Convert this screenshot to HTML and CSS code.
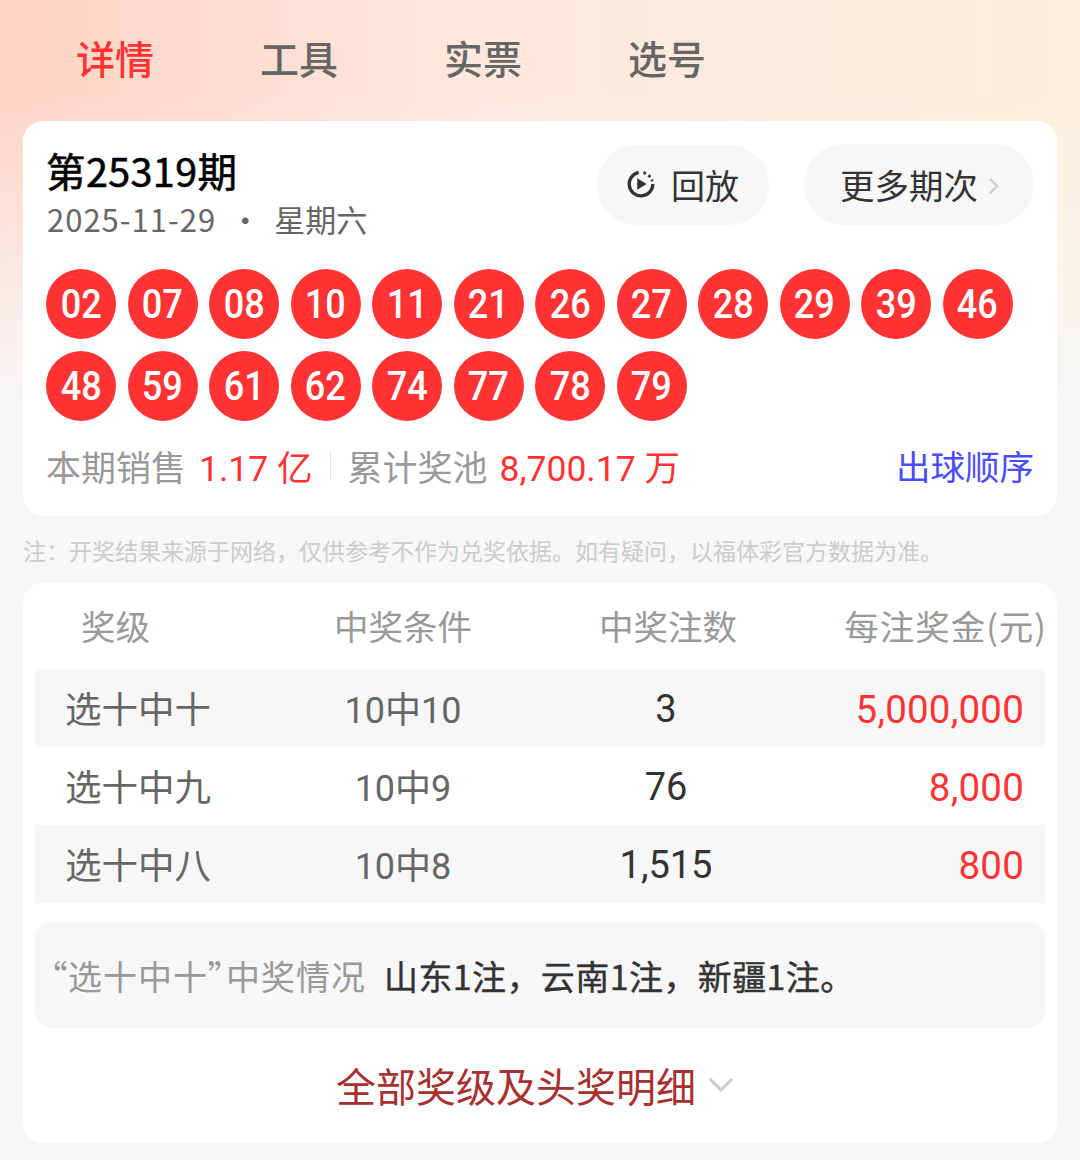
FILE: index.html
```html
<!DOCTYPE html>
<html lang="zh-CN">
<head>
    <meta charset="UTF-8">
    <meta name="viewport" content="width=device-width, initial-scale=1.0">
    <title>开奖详情</title>
    <link rel="stylesheet" href="styles.css">
</head>
<body>
    <nav class="tabs">
        <a class="tab active">详情</a>
        <a class="tab">工具</a>
        <a class="tab">实票</a>
        <a class="tab">选号</a>
    </nav>

    <section class="card draw">
        <div class="draw-head">
            <div class="draw-info">
                <h1>第25319期</h1>
                <p class="draw-date"><span class="date-num">2025-11-29</span><i>·</i><span>星期六</span></p>
            </div>
            <a class="pill replay">
                <svg class="replay-icon" viewBox="0 0 32 32" width="30" height="30">
                    <path d="M13.5 3.7A12.6 12.6 0 1 0 28.6 16" fill="none" stroke="#333" stroke-width="3.6"/>
                    <path d="M18.6 3.8l2.8.9M24 6.6l2 1.9M27.4 11.4l.7 1.6" fill="none" stroke="#333" stroke-width="3"/>
                    <path d="M12 9.8L22 16l-10 6.2z" fill="#333"/>
                </svg>
                回放
            </a>
            <a class="pill more">
                更多期次
                <svg class="more-arrow" viewBox="0 0 12 20" width="11" height="18">
                    <path d="M2 2l8 8-8 8" fill="none" stroke="#ccc" stroke-width="2.4"/>
                </svg>
            </a>
        </div>

        <div class="balls">
            <span class="ball"><span>02</span></span><span class="ball"><span>07</span></span><span class="ball"><span>08</span></span><span class="ball"><span>10</span></span>
            <span class="ball"><span>11</span></span><span class="ball"><span>21</span></span><span class="ball"><span>26</span></span><span class="ball"><span>27</span></span>
            <span class="ball"><span>28</span></span><span class="ball"><span>29</span></span><span class="ball"><span>39</span></span><span class="ball"><span>46</span></span>
            <span class="ball"><span>48</span></span><span class="ball"><span>59</span></span><span class="ball"><span>61</span></span><span class="ball"><span>62</span></span>
            <span class="ball"><span>74</span></span><span class="ball"><span>77</span></span><span class="ball"><span>78</span></span><span class="ball"><span>79</span></span>
        </div>

        <div class="stats">
            <span class="stat-label">本期销售</span>
            <span class="stat-value">1.17 亿</span>
            <span class="stat-sep"></span>
            <span class="stat-label">累计奖池</span>
            <span class="stat-value">8,700.17 万</span>
            <a class="order-link">出球顺序</a>
        </div>
    </section>

    <p class="notice">注：开奖结果来源于网络，仅供参考不作为兑奖依据。如有疑问，以福体彩官方数据为准。</p>

    <section class="card prizes">
        <div class="prize-head">
            <span>奖级</span>
            <span>中奖条件</span>
            <span>中奖注数</span>
            <span>每注奖金(元)</span>
        </div>
        <div class="prize-row">
            <span>选十中十</span>
            <span class="num">10中10</span>
            <span class="num count">3</span>
            <span class="num money">5,000,000</span>
        </div>
        <div class="prize-row">
            <span>选十中九</span>
            <span class="num">10中9</span>
            <span class="num count">76</span>
            <span class="num money">8,000</span>
        </div>
        <div class="prize-row">
            <span>选十中八</span>
            <span class="num">10中8</span>
            <span class="num count">1,515</span>
            <span class="num money">800</span>
        </div>

        <div class="winners">
            <span class="winners-label">“选十中十”中奖情况</span>
            <span class="winners-text">山东1注，云南1注，新疆1注。</span>
        </div>

        <a class="all-prizes">
            全部奖级及头奖明细
            <svg viewBox="0 0 26 16" width="26" height="16">
                <path d="M2 2l11 11L24 2" fill="none" stroke="#ccc" stroke-width="3"/>
            </svg>
        </a>
    </section>
</body>
</html>
```

FILE: styles.css
```css
/* Page */
body {
    margin: 0;
    height: 1160px;
    overflow: hidden;
    background-color: #f7f7f7;
    background-image:
        linear-gradient(180deg, rgba(247, 247, 247, 0) 0, rgba(247, 247, 247, 0) 90px, #f7f7f7 400px),
        linear-gradient(90deg, #ffd3c4 0, #ffe8de 45%, #fbf0da 100%);
    background-repeat: no-repeat;
    font-family: "Noto Sans CJK SC", "Roboto", sans-serif;
    color: #333;
}

p, h1 {
    margin: 0;
}

/* Tabs */
.tabs {
    display: flex;
    gap: 106px;
    height: 121px;
    padding: 0 0 8px 76px;
    box-sizing: border-box;
    align-items: center;
}

.tab {
    font-size: 39px;
    font-weight: 500;
    color: #666;
}

.tab.active {
    color: #ff3333;
}

/* Cards */
.card {
    margin: 0 23px;
    background: #fff;
    border-radius: 20px;
}

.draw {
    height: 395px;
    box-sizing: border-box;
    padding: 23px 23px 0;
}

.draw-head {
    display: flex;
    align-items: flex-start;
    height: 125px;
}

.draw-info {
    flex: 1;
}

.draw-info h1 {
    font-size: 39.5px;
    font-weight: 400;
    -webkit-text-stroke: 0.6px #000;
    letter-spacing: 0.4px;
    line-height: 52px;
    color: #000;
}

.draw-date {
    display: flex;
    font-size: 31px;
    line-height: 46px;
    color: #666;
}

.date-num {
    margin-left: 1px;
    letter-spacing: 1px;
}

.draw-date i {
    width: 58px;
    font-style: normal;
    text-align: center;
}

.pill {
    display: flex;
    align-items: center;
    height: 80px;
    padding-bottom: 2px;
    background: #f7f7f7;
    border-radius: 40px;
    font-size: 34.5px;
    color: #333;
    box-sizing: border-box;
}

.replay {
    width: 172px;
    margin-top: 1px;
    padding-left: 29px;
    gap: 15px;
    font-size: 34px;
}

.more {
    width: 230px;
    height: 81px;
    margin-left: 35px;
    padding-left: 36px;
    gap: 10px;
}

.more-arrow {
    margin-top: 4px;
}

/* Balls */
.balls {
    display: grid;
    grid-template-columns: repeat(12, 70px);
    column-gap: 11.5px;
    row-gap: 12px;
}

.ball {
    width: 70px;
    height: 70px;
    border-radius: 50%;
    background: #ff3333;
    color: #fff;
    font-family: "Roboto", sans-serif;
    font-size: 41px;
    font-weight: 500;
    line-height: 70px;
    text-align: center;
}

/* the reference digits are narrow, Roboto needs squeezing */
.ball span {
    display: inline-block;
    transform: scaleX(0.88);
}

/* Stats */
.stats {
    display: flex;
    align-items: center;
    margin-top: 22px;
    height: 44px;
    font-size: 35px;
}

.stat-label {
    color: #999;
}

.stat-value {
    margin-left: 13px;
    color: #ff3333;
    font-size: 35.5px;
    font-family: "Roboto", "Noto Sans CJK SC", sans-serif;
}

.stat-sep {
    width: 1px;
    height: 30px;
    margin: 0 17px;
    background: #e6e6e6;
}

.stat-sep + .stat-label + .stat-value {
    margin-left: 12px;
}

.order-link {
    margin-left: auto;
    font-size: 34.5px;
    color: #4c4cff;
}

/* Notice */
.notice {
    margin: 22px 0 21px 23px;
    font-size: 23px;
    line-height: 24px;
    color: #ccc;
}

/* Prize table */
.prizes {
    height: 560px;
    box-sizing: border-box;
    padding: 0 12px;
}

.prize-head,
.prize-row {
    display: grid;
    grid-template-columns: 235px 266px 260px 249px;
    align-items: center;
    text-align: center;
}

.prize-head {
    height: 86px;
    padding-bottom: 2px;
    box-sizing: border-box;
    font-size: 34.5px;
    color: #999;
}

.prize-head span:first-child {
    padding-right: 74px;
}

.prize-head span:nth-child(3) {
    padding-left: 4px;
}

.prize-head span:last-child {
    text-align: right;
    margin-right: -2px;
    letter-spacing: 1px;
    white-space: nowrap;
}

.prize-row {
    height: 78px;
    font-size: 36.5px;
    color: #666;
}

.prize-row:nth-child(even) {
    background: #f7f7f7;
}

.prize-row span:first-child {
    text-align: left;
    padding: 0 0 2px 30px;
}

.num {
    padding-bottom: 3px;
    font-family: "Roboto", "Noto Sans CJK SC", sans-serif;
    font-size: 36px;
}

.count {
    padding: 2px 0 0;
    font-size: 38px;
    color: #333;
}

.money {
    text-align: right;
    padding: 2px 21px 0 0;
    font-size: 38.5px;
    letter-spacing: 0.2px;
    color: #ff3333;
}

/* Winners */
.winners {
    display: flex;
    align-items: center;
    gap: 18px;
    height: 105px;
    margin-top: 20px;
    padding-left: 15px;
    background: #f7f7f7;
    border-radius: 16px;
    font-size: 34px;
}

.winners-label {
    color: #999;
    font-feature-settings: "palt";
    letter-spacing: 1px;
}

.winners-text {
    color: #333;
    -webkit-text-stroke: 0.4px #333;
    letter-spacing: 0.4px;
}

/* Footer link */
.all-prizes {
    display: flex;
    justify-content: center;
    align-items: center;
    gap: 12px;
    height: 115px;
    padding: 0 10px 2px 0;
    box-sizing: border-box;
    font-size: 40px;
    color: #a83030;
}
```
